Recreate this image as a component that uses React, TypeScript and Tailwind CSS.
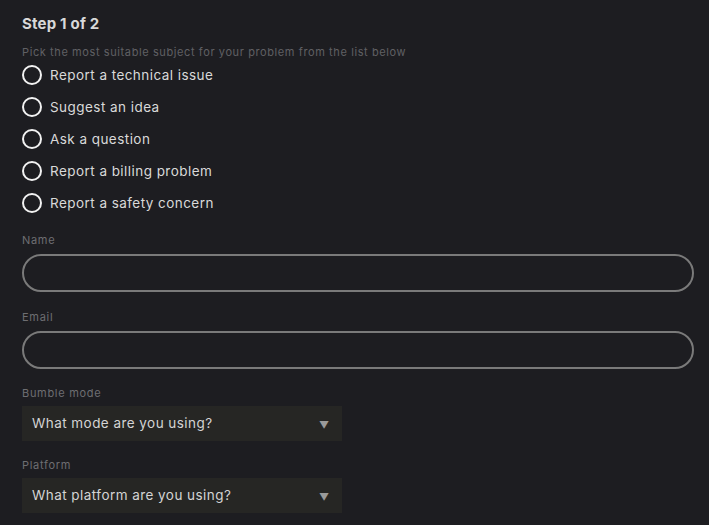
const subjects = [
  "Report a technical issue",
  "Suggest an idea",
  "Ask a question",
  "Report a billing problem",
  "Report a safety concern",
]

function Radio({ label }: { label: string }) {
  return (
    <label className="flex items-center gap-[8px] h-[32px] cursor-pointer">
      <span className="w-[20px] h-[20px] rounded-full border-2 border-[#f2f2f2] shrink-0" />
      <span className="text-[13.5px] tracking-[0.45px] text-[#d9d9d9]">{label}</span>
    </label>
  )
}

function TextField({ label, className = "" }: { label: string; className?: string }) {
  return (
    <div className={"flex flex-col " + className}>
      <span className="text-[11px] tracking-[0.7px] text-[#6e6e72] leading-[14px] mb-[7px]">{label}</span>
      <input className="h-[38px] w-full rounded-full border-2 border-[#7a7a7a] bg-transparent px-4 text-[#e0e0e0] outline-none" />
    </div>
  )
}

function SelectField({ label, placeholder, className = "" }: { label: string; placeholder: string; className?: string }) {
  return (
    <div className={"flex flex-col " + className}>
      <span className="text-[11px] tracking-[0.7px] text-[#6e6e72] leading-[14px] mb-[6px]">{label}</span>
      <div className="h-[35px] w-[320px] bg-[#262624] flex items-center justify-between pl-[10px] pr-[13px]">
        <span className="text-[13.5px] tracking-[0.45px] text-[#d4d4d4]">{placeholder}</span>
        <span className="text-[10px] text-[#9a9a9a] mt-[4px]">▼</span>
      </div>
    </div>
  )
}

export default function App() {
  return (
    <div
      className="min-h-[525px] bg-[#1d1d21] pl-[22px] pr-[15px] pt-[14px]"
      style={{ fontFamily: "Inter, 'Noto Sans', sans-serif" }}
    >
      <h1 className="text-[15px] font-bold tracking-[0.2px] text-[#d8d8d8] leading-[20px]">Step 1 of 2</h1>
      <p className="mt-[11px] text-[11px] tracking-[0.6px] text-[#606064] leading-[14px]">
        Pick the most suitable subject for your problem from the list below
      </p>
      <div className="flex flex-col">
        {subjects.map((s) => (
          <Radio key={s} label={s} />
        ))}
      </div>
      <div className="flex flex-col mt-[14px]">
        <TextField label="Name" />
        <TextField label="Email" className="mt-[18px]" />
        <SelectField label="Bumble mode" placeholder="What mode are you using?" className="mt-[17px]" />
        <SelectField label="Platform" placeholder="What platform are you using?" className="mt-[17px]" />
      </div>
    </div>
  )
}
